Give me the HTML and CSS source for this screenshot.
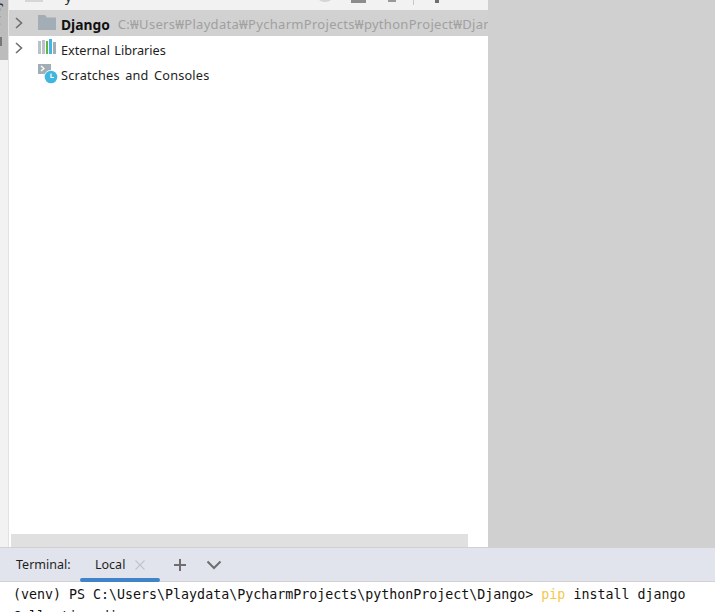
FILE: index.html
```html
<!DOCTYPE html>
<html lang="en">
<head>
<meta charset="utf-8">
<title>PyCharm</title>
<link rel="stylesheet" href="styles.css">
</head>
<body>
<div class="top">
  <aside class="strip"><div class="strip-tab"><span class="strip-text">Project</span><span class="strip-mark"></span></div></aside>
  <section class="project">
    <header class="proj-head">
      <svg class="head-left" width="18" height="3" viewBox="0 0 18 3"><rect width="18" height="2" fill="#d6d6d6"/></svg>
      <span class="head-title">y</span>
      <div class="head-tools">
        <svg class="tool-circle" width="14" height="3" viewBox="0 0 14 3"><path d="M1 0a7 4 0 0 0 12 0z" fill="#d4d4d4"/></svg>
        <svg class="tool-bar" width="15" height="3" viewBox="0 0 15 3"><rect width="15" height="3" fill="#8c8c8c"/></svg>
        <svg class="tool-small" width="8" height="2" viewBox="0 0 8 2"><rect width="8" height="2" fill="#9a9a9a"/></svg>
        <span class="head-sep"></span>
        <svg class="tool-dot" width="4" height="3" viewBox="0 0 4 3"><rect width="4" height="3" fill="#6e6e6e"/></svg>
      </div>
    </header>
    <div class="row row-selected">
      <svg class="chev" width="10" height="12" viewBox="0 0 10 12"><path d="M2 1l5.500 5L2 11" fill="none" stroke="#6e6e6e" stroke-width="1.600"/></svg>
      <svg class="icon icon-folder" width="18" height="15" viewBox="0 0 18 15"><path d="M0 0h7l2 2.500h9V15H0z" fill="#a3adb5"/></svg>
      <span class="name-bold">Django</span>
      <span class="path">C:₩Users₩Playdata₩PycharmProjects₩pythonProject₩Django</span>
    </div>
    <div class="row">
      <svg class="chev chev-up" width="10" height="12" viewBox="0 0 10 12"><path d="M2 1l5.500 5L2 11" fill="none" stroke="#6e6e6e" stroke-width="1.600"/></svg>
      <svg class="icon icon-libs" width="18" height="15" viewBox="0 0 18 15">
        <rect x="0" y="2" width="3" height="13" fill="#b9c2c8"/>
        <rect x="4" y="1" width="3" height="14" fill="#b9c2c8"/>
        <rect x="8" y="2" width="2" height="13" fill="#62b543"/>
        <rect x="11" y="0" width="3" height="15" fill="#40b6e0"/>
        <rect x="15" y="3" width="3" height="12" fill="#a3adb5"/>
      </svg>
      <span class="name name-ext">External Libraries</span>
    </div>
    <div class="row">
      <span class="chev-space"></span>
      <svg class="icon icon-scratch" width="20" height="20" viewBox="0 0 20 20">
        <rect x="0" y="0" width="13" height="10" fill="#a3adb5"/>
        <path d="M3 2l3 2.500L3 7" fill="none" stroke="#fff" stroke-width="1.200"/>
        <circle cx="13" cy="13" r="7" fill="#fff"/>
        <circle cx="13" cy="13" r="6.300" fill="#40b6e0"/>
        <path d="M13 9.500v4h3" fill="none" stroke="#fff" stroke-width="1.200"/>
      </svg>
      <span class="name name-scratch">Scratches and Consoles</span>
    </div>
    <div class="spacer"></div>
    <div class="hscroll-wrap"><div class="hscroll"></div></div>
  </section>
  <div class="backdrop"></div>
</div>
<section class="terminal">
  <div class="term-bar">
    <span class="term-label">Terminal:</span>
    <div class="term-tab">
      <span class="tab-name">Local</span>
      <svg width="12" height="12" viewBox="0 0 12 12"><path d="M1.500 1.500l9 9M10.500 1.500l-9 9" stroke="#c0c4cc" stroke-width="1.200" fill="none"/></svg>
    </div>
    <svg class="tool-plus" width="14" height="14" viewBox="0 0 14 14"><path d="M7 1v12M1 7h12" stroke="#6e6e6e" stroke-width="2" fill="none"/></svg>
    <svg class="tool-down" width="16" height="10" viewBox="0 0 16 10"><path d="M1.500 1.500L8 8l6.500-6.500" stroke="#6e6e6e" stroke-width="2" fill="none"/></svg>
  </div>
  <div class="term-body">
    <div class="line">(venv) PS C:\Users\Playdata\PycharmProjects\pythonProject\Django&gt; <span class="cmd">pip</span> install django</div>
    <div class="line">Collecting django</div>
  </div>
</section>
</body>
</html>
```
FILE: styles.css
```css
* { box-sizing: border-box; }
html, body { margin: 0; height: 100%; }
body {
  width: 715px;
  height: 612px;
  overflow: hidden;
  display: flex;
  flex-direction: column;
  background: #fff;
  font-family: "Noto Sans", "Noto Sans CJK KR", sans-serif;
}
.top { display: flex; height: 547px; flex: none; }
.strip {
  width: 9px;
  flex: none;
  background: #f2f2f2;
  border-right: 1px solid #e2e2e2;
}
.strip-tab {
  width: 8px;
  height: 60px;
  background: #bcbcbc;
  position: relative;
  overflow: hidden;
}
.strip-text {
  position: absolute;
  left: -12px;
  bottom: 34px;
  writing-mode: vertical-rl;
  transform: rotate(180deg);
  font-size: 12.500px;
  line-height: 15px;
  color: #1e2a44;
}
.strip-mark {
  position: absolute;
  left: 0;
  top: 37px;
  width: 2px;
  height: 9px;
  background: #777;
}
.project {
  width: 479px;
  flex: none;
  display: flex;
  flex-direction: column;
  background: #fff;
}
.proj-head {
  height: 10px;
  flex: none;
  background: #f2f2f2;
  display: flex;
  align-items: flex-start;
  padding-left: 16px;
  position: relative;
  overflow: hidden;
}
.head-title {
  font-size: 13px;
  line-height: 13px;
  margin-top: -9px;
  margin-left: 22px;
  color: #222;
}
.head-tools {
  margin-left: auto;
  margin-right: 49px;
  display: flex;
  align-items: flex-start;
}
.tool-bar { margin-left: 19px; }
.tool-small { margin-left: 22px; }
.head-sep { width: 1px; height: 5px; margin-left: 17px; background: #c9c9c9; }
.tool-dot { margin-left: 21px; }
.row {
  height: 26px;
  flex: none;
  display: flex;
  align-items: center;
  white-space: nowrap;
  overflow: hidden;
  font-size: 12.7px;
  color: #1e1e1e;
  padding-left: 5px;
}
.row-selected { background: #d1d1d1; }
.chev { flex: none; margin-right: 14px; }
.chev-up { margin-top: -2px; }
.chev-space { width: 24px; flex: none; }
.icon { flex: none; margin-right: 5px; }
.icon-folder { margin-top: -2px; }
.icon-libs { margin-top: -6px; }
.icon-scratch { margin-right: 3px; margin-top: -3px; }
.name-ext { word-spacing: 1px; margin-top: 1px; }
.name-scratch { word-spacing: 2px; letter-spacing: 0.2px; }
.name-bold { font-weight: 700; font-size: 13.8px; color: #111; margin-right: 8px; margin-top: 2px; }
.path { color: #a0a0a0; font-size: 13px; letter-spacing: 0.3px; margin-top: 2px; }
.spacer { flex: 1; }
.hscroll-wrap { padding: 0 20px 0 2px; flex: none; }
.hscroll { height: 13px; background: #e0e0e0; }
.backdrop { flex: 1; background: #d0d0d0; }
.terminal { flex: 1; display: flex; flex-direction: column; min-height: 0; }
.term-bar {
  height: 35px;
  flex: none;
  display: flex;
  align-items: center;
  background: #e1e4ec;
  border-top: 1px solid #d1d1d1;
  border-bottom: 1px solid #d1d1d1;
  padding-left: 16px;
  font-size: 12.5px;
  color: #1e1e1e;
}
.term-label { margin-right: 7px; width: 57px; }
.term-tab {
  position: relative;
  width: 80px;
  height: 100%;
  display: flex;
  align-items: center;
  gap: 9px;
  padding-left: 15px;
}
.term-tab::after {
  content: "";
  position: absolute;
  left: 0;
  right: 0;
  bottom: -1px;
  height: 4px;
  border-radius: 2px;
  background: #4083c9;
}
.tool-plus { margin-left: 13px; }
.tool-down { margin-left: 19px; }
.term-body {
  flex: 1;
  overflow: hidden;
  padding: 2px 0 0 13px;
  font-family: "DejaVu Sans Mono", "Liberation Mono", monospace;
  font-size: 13.3px;
  line-height: 22px;
  color: #111;
  white-space: nowrap;
}
.cmd { color: #f5c84c; }
```
